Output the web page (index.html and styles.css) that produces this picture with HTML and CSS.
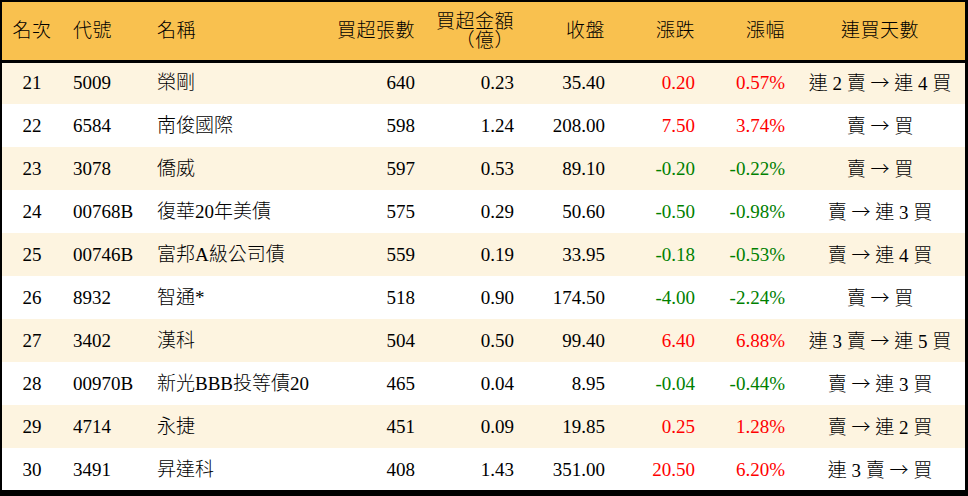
FILE: index.html
```html
<!DOCTYPE html>
<html lang="zh-Hant">
<head>
<meta charset="utf-8">
<title>買超排行</title>
<link rel="stylesheet" href="styles.css">
</head>
<body>
<div class="frame">
  <div class="clip">
    <table class="rank">
      <colgroup>
        <col class="c-rank"><col class="c-code"><col class="c-name"><col class="c-vol"><col class="c-amt"><col class="c-close"><col class="c-chg"><col class="c-pct"><col class="c-days">
      </colgroup>
      <thead>
        <tr>
          <th class="ctr">名次</th>
          <th class="lft">代號</th>
          <th class="lft">名稱</th>
          <th class="rgt">買超張數</th>
          <th class="rgt two">買超金額<br>（億）</th>
          <th class="rgt">收盤</th>
          <th class="rgt">漲跌</th>
          <th class="rgt">漲幅</th>
          <th class="ctr">連買天數</th>
        </tr>
      </thead>
      <tbody>
        <tr class="odd"><td class="ctr">21</td><td class="lft">5009</td><td class="lft">榮剛</td><td class="rgt">640</td><td class="rgt">0.23</td><td class="rgt">35.40</td><td class="rgt up">0.20</td><td class="rgt up">0.57%</td><td class="ctr">連 2 賣 <span class="arr">→</span> 連 4 買</td></tr>
        <tr><td class="ctr">22</td><td class="lft">6584</td><td class="lft">南俊國際</td><td class="rgt">598</td><td class="rgt">1.24</td><td class="rgt">208.00</td><td class="rgt up">7.50</td><td class="rgt up">3.74%</td><td class="ctr">賣 <span class="arr">→</span> 買</td></tr>
        <tr class="odd"><td class="ctr">23</td><td class="lft">3078</td><td class="lft">僑威</td><td class="rgt">597</td><td class="rgt">0.53</td><td class="rgt">89.10</td><td class="rgt down">-0.20</td><td class="rgt down">-0.22%</td><td class="ctr">賣 <span class="arr">→</span> 買</td></tr>
        <tr><td class="ctr">24</td><td class="lft">00768B</td><td class="lft">復華20年美債</td><td class="rgt">575</td><td class="rgt">0.29</td><td class="rgt">50.60</td><td class="rgt down">-0.50</td><td class="rgt down">-0.98%</td><td class="ctr">賣 <span class="arr">→</span> 連 3 買</td></tr>
        <tr class="odd"><td class="ctr">25</td><td class="lft">00746B</td><td class="lft">富邦A級公司債</td><td class="rgt">559</td><td class="rgt">0.19</td><td class="rgt">33.95</td><td class="rgt down">-0.18</td><td class="rgt down">-0.53%</td><td class="ctr">賣 <span class="arr">→</span> 連 4 買</td></tr>
        <tr><td class="ctr">26</td><td class="lft">8932</td><td class="lft">智通*</td><td class="rgt">518</td><td class="rgt">0.90</td><td class="rgt">174.50</td><td class="rgt down">-4.00</td><td class="rgt down">-2.24%</td><td class="ctr">賣 <span class="arr">→</span> 買</td></tr>
        <tr class="odd"><td class="ctr">27</td><td class="lft">3402</td><td class="lft">漢科</td><td class="rgt">504</td><td class="rgt">0.50</td><td class="rgt">99.40</td><td class="rgt up">6.40</td><td class="rgt up">6.88%</td><td class="ctr">連 3 賣 <span class="arr">→</span> 連 5 買</td></tr>
        <tr><td class="ctr">28</td><td class="lft">00970B</td><td class="lft">新光BBB投等債20</td><td class="rgt">465</td><td class="rgt">0.04</td><td class="rgt">8.95</td><td class="rgt down">-0.04</td><td class="rgt down">-0.44%</td><td class="ctr">賣 <span class="arr">→</span> 連 3 買</td></tr>
        <tr class="odd"><td class="ctr">29</td><td class="lft">4714</td><td class="lft">永捷</td><td class="rgt">451</td><td class="rgt">0.09</td><td class="rgt">19.85</td><td class="rgt up">0.25</td><td class="rgt up">1.28%</td><td class="ctr">賣 <span class="arr">→</span> 連 2 買</td></tr>
        <tr><td class="ctr">30</td><td class="lft">3491</td><td class="lft">昇達科</td><td class="rgt">408</td><td class="rgt">1.43</td><td class="rgt">351.00</td><td class="rgt up">20.50</td><td class="rgt up">6.20%</td><td class="ctr">連 3 賣 <span class="arr">→</span> 買</td></tr>
      </tbody>
    </table>
  </div>
</div>
</body>
</html>
```

FILE: styles.css
```css
html, body {
  margin: 0;
  padding: 0;
  background: #000;
}

.frame {
  box-sizing: border-box;
  width: 968px;
  height: 496px;
  padding: 2px 3px 6px 2px;
  background: #000;
}

.clip {
  width: 963px;
  height: 488px;
  overflow: hidden;
  background: #fff;
}

.rank {
  width: 963px;
  border-collapse: collapse;
  table-layout: fixed;
  font-family: "Liberation Serif", "Noto Sans CJK TC", serif;
  font-size: 19px;
  font-weight: 300;
  color: #000;
}

.c-rank { width: 60px; }
.c-code { width: 83px; }
.c-name { width: 185px; }
.c-vol { width: 95px; }
.c-amt { width: 99px; }
.c-close { width: 91px; }
.c-chg { width: 90px; }
.c-pct { width: 90px; }
.c-days { width: 170px; }

.rank thead tr {
  background: #f9c14f;
  height: 59px;
  border-bottom: 3px solid #000;
}

.rank th {
  font-weight: 300;
  padding: 0 10px 0 0;
  line-height: 20px;
  white-space: nowrap;
  letter-spacing: 0.5px;
}

.rank th.two {
  line-height: 19px;
}

.rank tbody tr {
  height: 43px;
  background: #fff;
}

.rank tbody tr.odd {
  background: #fdf4e0;
}

.rank td {
  padding: 0 10px 0 0;
  white-space: nowrap;
  line-height: 22px;
}

.ctr { text-align: center; }
.rank .ctr { padding: 0; }
.rank .lft { text-align: left; padding-left: 11px; }
.rank tr > :nth-child(3) { padding-left: 12px; }
.rgt { text-align: right; }

.arr {
  font-family: "Noto Sans CJK TC", sans-serif;
  font-size: 19px;
}

.up { color: #ff0000; }
.down { color: #008000; }
```
